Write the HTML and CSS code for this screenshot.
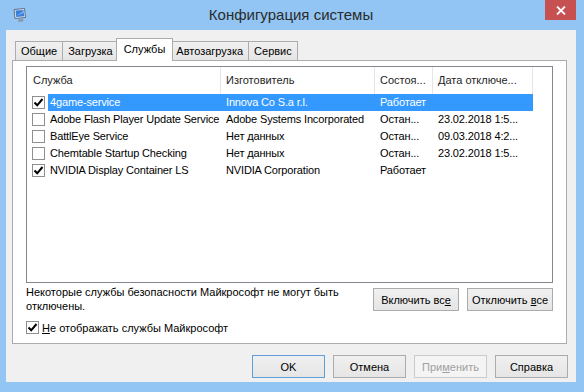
FILE: index.html
```html
<!DOCTYPE html>
<html lang="ru">
<head>
    <meta charset="UTF-8">
    <title>Конфигурация системы</title>
    <link rel="stylesheet" href="styles.css">
</head>
<body>
    <div class="window">
        <!-- Title bar -->
        <div class="titlebar">
            <svg class="app-icon" width="16" height="16" viewBox="0 0 16 16">
                <path d="M2 2.5 L12.5 1.5 L13.5 10.5 L3 11.5 Z" fill="#e4eaf2" stroke="#5d6f88"/>
                <path d="M3.5 3.6 L11.6 2.9 L12.3 9.3 L4.2 10 Z" fill="#3b7ddb"/>
                <path d="M4.2 9 L11.8 3.5 L12.1 6 Z" fill="#8fc0f5" opacity="0.7"/>
                <path d="M6 12.5 L11 12 L11.5 14.5 L6.5 15 Z" fill="#8d98a7"/>
            </svg>
            <div class="title">Конфигурация системы</div>
            <div class="close">
                <svg width="10" height="9" viewBox="0 0 10 9">
                    <path d="M1 0.5 L9 8.5 M9 0.5 L1 8.5" stroke="#fff" stroke-width="1.8"/>
                </svg>
            </div>
        </div>

        <!-- Client area -->
        <div class="client">
            <div class="tabs">
                <div class="tab">Общие</div>
                <div class="tab">Загрузка</div>
                <div class="tab active">Службы</div>
                <div class="tab">Автозагрузка</div>
                <div class="tab">Сервис</div>
            </div>

            <div class="panel">
                <div class="list">
                    <div class="list-head">
                        <div class="hcell">Служба</div>
                        <div class="hcell">Изготовитель</div>
                        <div class="hcell">Состоя...</div>
                        <div class="hcell">Дата отключе...</div>
                    </div>

                    <div class="row selected">
                        <div class="check-cell"><span class="cb"><svg width="11" height="11" viewBox="0 0 11 11"><path d="M1.5 5.5 L4.2 8.3 L9.5 2" fill="none" stroke="#000" stroke-width="2"/></svg></span></div>
                        <div class="cells">
                            <div class="cell">4game-service</div>
                            <div class="cell">Innova Co S.a r.l.</div>
                            <div class="cell">Работает</div>
                            <div class="cell"></div>
                        </div>
                    </div>
                    <div class="row">
                        <div class="check-cell"><span class="cb"></span></div>
                        <div class="cells">
                            <div class="cell">Adobe Flash Player Update Service</div>
                            <div class="cell">Adobe Systems Incorporated</div>
                            <div class="cell">Остан...</div>
                            <div class="cell">23.02.2018 1:5...</div>
                        </div>
                    </div>
                    <div class="row">
                        <div class="check-cell"><span class="cb"></span></div>
                        <div class="cells">
                            <div class="cell">BattlEye Service</div>
                            <div class="cell">Нет данных</div>
                            <div class="cell">Остан...</div>
                            <div class="cell">09.03.2018 4:2...</div>
                        </div>
                    </div>
                    <div class="row">
                        <div class="check-cell"><span class="cb"></span></div>
                        <div class="cells">
                            <div class="cell">Chemtable Startup Checking</div>
                            <div class="cell">Нет данных</div>
                            <div class="cell">Остан...</div>
                            <div class="cell">23.02.2018 1:5...</div>
                        </div>
                    </div>
                    <div class="row">
                        <div class="check-cell"><span class="cb"><svg width="11" height="11" viewBox="0 0 11 11"><path d="M1.5 5.5 L4.2 8.3 L9.5 2" fill="none" stroke="#000" stroke-width="2"/></svg></span></div>
                        <div class="cells">
                            <div class="cell">NVIDIA Display Container LS</div>
                            <div class="cell">NVIDIA Corporation</div>
                            <div class="cell">Работает</div>
                            <div class="cell"></div>
                        </div>
                    </div>
                </div>

                <div class="note-row">
                    <p class="note">Некоторые службы безопасности Майкрософт не могут быть<br>отключены.</p>
                    <div class="note-btns">
                        <button class="btn wide">Включить вс<u>е</u></button>
                        <button class="btn wide">Отключить <u>в</u>се</button>
                    </div>
                </div>

                <div class="hide-ms">
                    <span class="cb"><svg width="11" height="11" viewBox="0 0 11 11"><path d="M1.5 5.5 L4.2 8.3 L9.5 2" fill="none" stroke="#000" stroke-width="2"/></svg></span>
                    <span><u>Н</u>е отображать службы Майкрософт</span>
                </div>
            </div>

            <!-- Dialog buttons -->
            <div class="footer">
                <button class="btn default">OK</button>
                <button class="btn">Отмена</button>
                <button class="btn disabled">При<u>м</u>енить</button>
                <button class="btn">Справка</button>
            </div>
        </div>
    </div>
</body>
</html>
```

FILE: styles.css
```css
/* General */
body {
    margin: 0;
    width: 584px;
    height: 392px;
    overflow: hidden;
    background: #92c5f4;
    font-family: 'Liberation Sans', Arial, sans-serif;
    font-size: 11px;
    color: #000;
}
.window {
    height: 392px;
    box-sizing: border-box;
    padding: 0 8px 10px 6px;
    display: flex;
    flex-direction: column;
}

/* Title bar */
.titlebar {
    height: 30px;
    display: grid;
    grid-template-columns: 1fr auto 1fr;
    align-items: start;
}
.app-icon {
    margin: 7px 0 0 6px;
}
.title {
    margin-top: 6px;
    font-size: 15px;
    color: #2b2b2b;
}
.close {
    justify-self: end;
    width: 31px;
    height: 20px;
    background: #c75050;
    display: flex;
    justify-content: center;
    align-items: center;
}

/* Client area */
.client {
    flex: 1;
    background: #f0f0f0;
    padding: 8px 9px 0 6px;
    display: flex;
    flex-direction: column;
}

/* Tabs */
.tabs {
    display: flex;
    align-items: flex-end;
    height: 22px;
    padding-left: 4px;
}
.tab {
    height: 19px;
    box-sizing: border-box;
    padding: 3px 5px 0;
    margin-left: -1px;
    border: 1px solid #acacac;
    border-bottom: none;
    background: linear-gradient(#f0f0f0, #e5e5e5);
}
.tab.active {
    position: relative;
    z-index: 1;
    height: 23px;
    margin: 0 -2px -1px -3px;
    padding: 4px 7px 0;
    background: #fff;
}

/* Tab panel */
.panel {
    height: 284px;
    box-sizing: border-box;
    background: #fff;
    border: 1px solid #acacac;
    padding: 5px 13px 0;
}

/* Services list */
.list {
    height: 217px;
    box-sizing: border-box;
    border: 1px solid #828790;
}
.list-head {
    display: grid;
    grid-template-columns: 194px 154px 58px 100px;
    height: 27px;
}
.hcell {
    border-right: 1px solid #e5e5e5;
    padding-left: 5px;
    line-height: 27px;
    white-space: nowrap;
    color: #1e1e1e;
}
.hcell:first-child {
    padding-left: 6px;
}
.row {
    display: flex;
    height: 17px;
}
.check-cell {
    width: 21px;
    display: flex;
    align-items: center;
    padding-left: 5px;
    box-sizing: border-box;
}
.cells {
    display: grid;
    grid-template-columns: 173px 154px 58px 100px;
    line-height: 17px;
    white-space: nowrap;
    letter-spacing: -0.15px;
}
.cell {
    padding-left: 5px;
    overflow: hidden;
}
.cell:first-child {
    padding-left: 2px;
}
.row.selected .cells {
    background: #3399ff;
    color: #fff;
}

/* Checkbox */
.cb {
    width: 13px;
    height: 13px;
    box-sizing: border-box;
    border: 1px solid #8f8f8f;
    background: #fff;
    display: inline-flex;
    justify-content: center;
    align-items: center;
}

/* Note + enable/disable buttons */
.note-row {
    display: flex;
    justify-content: space-between;
    align-items: flex-start;
    margin-top: 2px;
}
.note {
    margin: 0;
    line-height: 14px;
}
.note-btns {
    display: flex;
    gap: 8px;
    margin-top: 3px;
}
.btn {
    height: 23px;
    width: 73px;
    padding: 0;
    border: 1px solid #acacac;
    background: linear-gradient(#f0f0f0, #e5e5e5);
    font-family: inherit;
    font-size: 11px;
    color: #000;
}
.btn.wide {
    width: 86px;
}
.btn.default {
    border-color: #5f9edc;
}
.btn.disabled {
    color: #a0a0a0;
    border-color: #cbcbcb;
    background: #f4f4f4;
}
.hide-ms {
    display: flex;
    align-items: center;
    gap: 3px;
    margin-top: 8px;
}

/* Footer buttons */
.footer {
    display: flex;
    justify-content: flex-end;
    gap: 8px;
    margin: 11px -1px 0 0;
}
```
